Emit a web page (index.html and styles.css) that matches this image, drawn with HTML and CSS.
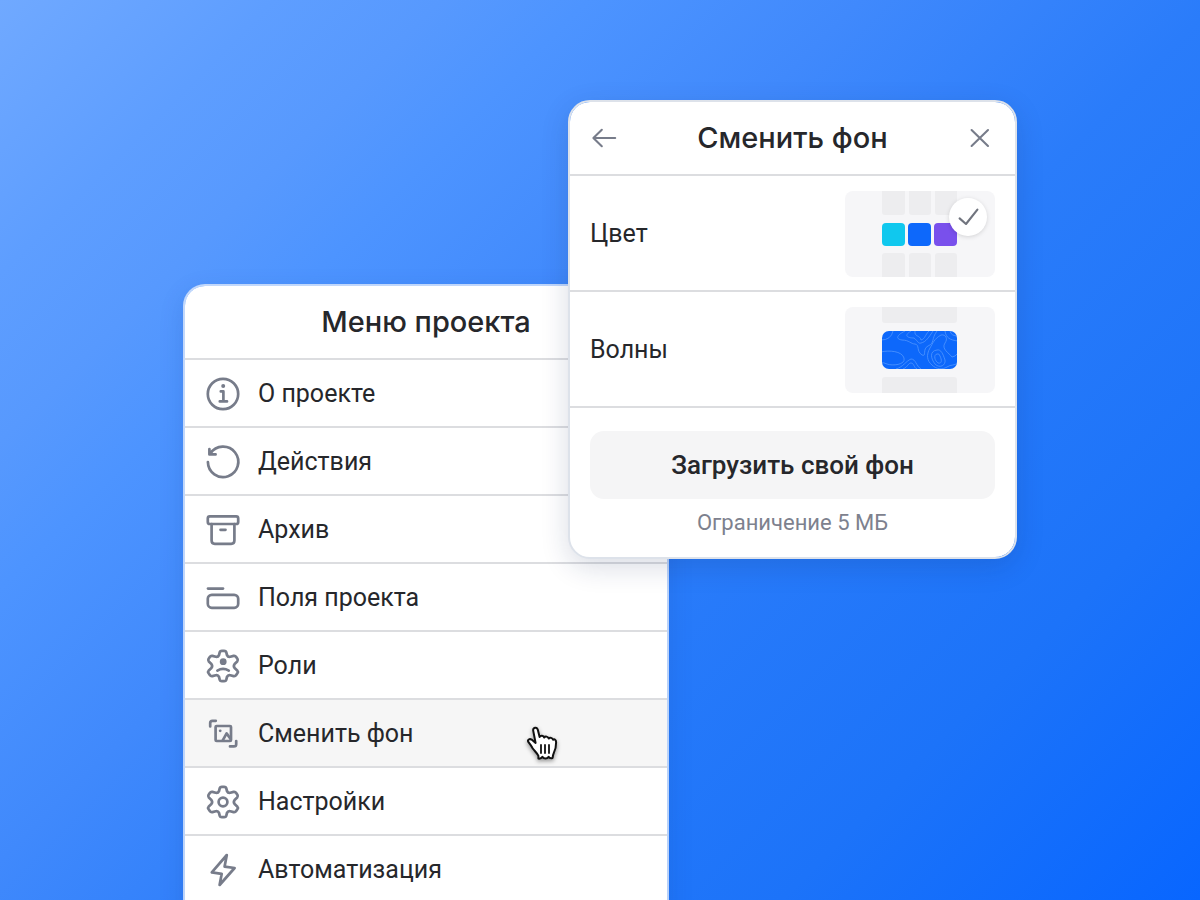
FILE: index.html
```
<!DOCTYPE html>
<html lang="ru">
<head>
<meta charset="utf-8">
<meta name="viewport" content="width=device-width, initial-scale=1">
<title>Меню проекта</title>
<link rel="stylesheet" href="styles.css">
</head>
<body>
<svg class="defs" aria-hidden="true">
  <symbol id="gear" viewBox="-18 -18 36 36">
    <path d="M-1.2-15.2H1.2Q2.8-15.2 3.3-13.7L4-10.9C4.6-9.5 5.8-8.9 7.3-9.2L10.6-10.1Q12.3-10.4 13.2-9L14.5-7Q15.3-5.6 14.2-4.4L11.6-2C10.7-.8 10.7.8 11.6 2L14.2 4.4Q15.3 5.6 14.5 7L13.2 9Q12.3 10.4 10.6 10.1L7.3 9.2C5.8 8.9 4.6 9.5 4 10.9L3.3 13.7Q2.8 15.2 1.2 15.2H-1.2Q-2.8 15.2-3.3 13.7L-4 10.9C-4.6 9.5-5.8 8.9-7.3 9.2L-10.6 10.1Q-12.3 10.4-13.2 9L-14.5 7Q-15.3 5.6-14.2 4.4L-11.6 2C-10.7.8-10.7-.8-11.6-2L-14.2-4.4Q-15.3-5.6-14.5-7L-13.2-9Q-12.3-10.4-10.6-10.1L-7.3-9.2C-5.8-8.9-4.6-9.5-4-10.9L-3.3-13.7Q-2.8-15.2-1.2-15.2Z"/>
  </symbol>
</svg>
<main class="stage">
  <nav class="panel menu" aria-labelledby="menu-title">
    <header class="panel-head"><h1 class="title" id="menu-title">Меню проекта</h1></header>
    <button class="item" type="button">
      <svg class="icon" viewBox="-18 -18 36 36"><circle r="15.2"/><path d="M-2.2-2.6H.4V7.4M-3.2 7.4H4"/><circle class="solid" cx=".2" cy="-8" r="2"/></svg>
      <span>О проекте</span>
    </button>
    <button class="item" type="button">
      <svg class="icon" viewBox="-18 -18 36 36"><path d="M-15.1 0A15.2 15.2 0 1 0-12.6-8.5M-13.6-13V-7.6H-7.4"/></svg>
      <span>Действия</span>
    </button>
    <button class="item" type="button">
      <svg class="icon" viewBox="-18 -18 36 36"><rect x="-15.2" y="-13.6" width="30.4" height="7.6" rx="2"/><path d="M-11.4-6V10.6Q-11.4 13.8-8.2 13.8H8.2Q11.4 13.8 11.4 10.6V-6M-2.5-.2H2.5"/></svg>
      <span>Архив</span>
    </button>
    <button class="item" type="button">
      <svg class="icon" viewBox="-18 -18 36 36"><path d="M-15-9.4H0"/><rect x="-15.2" y="-3.2" width="30.4" height="13" rx="4"/></svg>
      <span>Поля проекта</span>
    </button>
    <button class="item" type="button">
      <svg class="icon" viewBox="-18 -18 36 36"><use href="#gear" x="-18" y="-18" width="36" height="36"/><circle class="solid" cx=".2" cy="-4.3" r="3.4"/><path d="M-5.6 4.6Q0 1.2 5.8 4.6"/></svg>
      <span>Роли</span>
    </button>
    <button class="item hovered" type="button">
      <svg class="icon" viewBox="-18 -18 36 36"><path d="M-12.8-7.6V-11Q-12.8-13.2-10.6-13.2H-7.2M7 12.4H10.8Q13.2 12.4 13.2 10.2V7"/><rect x="-7.4" y="-8" width="15.4" height="15" rx="1"/><path d="M-.4 6.6L3.6-.6L7.6 5"/><circle class="solid" cx="-2.8" cy="-3.2" r="1.4"/></svg>
      <span>Сменить фон</span>
      <svg class="cursor" viewBox="0 0 34 38" aria-hidden="true"><path d="M6.2 4.6C5.6 1.2 10 .5 10.8 3.8L12.6 11C13.6 9.2 16.6 9.5 17.1 11.6C18.2 9.9 21.2 10.4 21.7 12.6C22.8 11.1 25.6 11.8 26.1 13.8C27.4 12.6 29.2 13.8 29.1 16.4C29.1 20.8 28.2 24 27 26.4C26.2 28.2 25.8 29.6 25.6 32C23.8 32.4 22.4 32.3 21.6 30.8C20 33.2 17 33.2 15.4 30.8C14.2 32.7 12.6 32.8 11.4 32.6V29.8C10.2 27.2 7.4 24.8 5.6 22.2C4.2 19.4 2.2 17.2 1.3 15.9C.2 13.8 2.6 12.4 4.6 13.6L8.6 16.9Z"/><path class="creases" d="M14 19V27M18 19V27M22 19V27"/></svg>
    </button>
    <button class="item" type="button">
      <svg class="icon" viewBox="-18 -18 36 36"><use href="#gear" x="-18" y="-18" width="36" height="36"/><circle r="4.4"/></svg>
      <span>Настройки</span>
    </button>
    <button class="item" type="button">
      <svg class="icon" viewBox="-18 -18 36 36"><path d="M3.8-15L-11.2 2.4L-1.3 3.8L-3.4 15L11.6-2L1.6-3.4Z"/></svg>
      <span>Автоматизация</span>
    </button>
  </nav>

  <section class="panel popup" aria-labelledby="popup-title">
    <header class="panel-head">
      <button class="head-button" type="button" aria-label="Назад"><svg class="icon thin" viewBox="-18 -18 36 36"><path d="M11.2 0H-10M-2.2-8.2L-10.6 0L-2.2 8.2"/></svg></button>
      <h2 class="title" id="popup-title">Сменить фон</h2>
      <button class="head-button" type="button" aria-label="Закрыть"><svg class="icon thin" viewBox="-18 -18 36 36"><path d="M-9.4-8L7 8M7-8L-9.4 8"/></svg></button>
    </header>
    <button class="option" type="button">
      <span>Цвет</span>
      <svg class="thumb" viewBox="0 0 150 86" aria-hidden="true">
        <rect width="150" height="86" rx="8" fill="#f6f6f8"/>
        <path fill="#ededef" d="M37 0H60V21Q60 24 57 24H40Q37 24 37 21ZM64 0H86V21Q86 24 83 24H67Q64 24 64 21ZM90 0H112V21Q112 24 109 24H93Q90 24 90 21ZM37 86H60V65Q60 62 57 62H40Q37 62 37 65ZM64 86H86V65Q86 62 83 62H67Q64 62 64 65ZM90 86H112V65Q112 62 109 62H93Q90 62 90 65Z"/>
        <rect x="37" y="32" width="23" height="23" rx="4" fill="#10c8ee"/>
        <rect x="63" y="32" width="23" height="23" rx="4" fill="#0d68fb"/>
        <rect x="89" y="32" width="23" height="23" rx="4" fill="#7950ec"/>
        <circle class="badge" cx="123" cy="26" r="19"/>
        <path class="tick" d="M114.6 27.4L121 33L132.4 18.6"/>
      </svg>
    </button>
    <button class="option" type="button">
      <span>Волны</span>
      <svg class="thumb" viewBox="0 0 150 86" aria-hidden="true">
        <defs><clipPath id="wave-clip"><rect x="37" y="24" width="75" height="38" rx="7"/></clipPath></defs>
        <rect width="150" height="86" rx="8" fill="#f6f6f8"/>
        <path fill="#ededef" d="M37 0H112V13Q112 16 109 16H40Q37 16 37 13ZM37 86H112V73Q112 70 109 70H40Q37 70 37 73Z"/>
        <rect x="37" y="24" width="75" height="38" rx="7" fill="#0d68fb"/>
        <g class="waves" clip-path="url(#wave-clip)">
          <path d="M36 33Q46 33 48 24M36 45C44 43 57 44 59 51C61 58 47 59 42 57Q38 55 36 56"/>
          <path d="M60 24C52 28 50 32 57 33C64 33 66 37 70 37C75 38 71 44 77 48C82 50 77 42 83 39C90 36 86 32 92 24"/>
          <path d="M66 24C58 29 63 31 69 31C73 34 73 37 76 36C81 35 84 30 88 24M70 24C69 30 75 28 76 33C80 32 80 28 84 24"/>
          <path d="M51 62C58 60 61 54 66 52C71 52 71 59 76 62M58 62C63 60 63 56 66 56C69 56 69 61 72 62"/>
          <path d="M96 28C89 32 88 36 85 41C81 48 82 54 87 58C91 62 97 63 102 60C106 57 110 59 112 56M92 43C84 44 86 52 90 57C95 62 101 58 100 53C98 47 96 42 92 43Z"/>
          <path d="M96 28C101 27 103 32 100 36C96 42 104 46 107 50Q110 50 113 46M100 24C101 31 105 33 113 34M105 24Q106 29 113 29M92 47C88 48 90 54 93 56C97 57 97 53 95 49Q94 46 92 47Z"/>
        </g>
      </svg>
    </button>
    <div class="upload">
      <button class="upload-button" type="button">Загрузить свой фон</button>
      <p class="hint">Ограничение 5 МБ</p>
    </div>
  </section>
</main>
</body>
</html>
```
FILE: styles.css
```
* { box-sizing: border-box; }

body {
  margin: 0;
  font-family: Roboto, "Open Sans", sans-serif;
  font-size: 25px;
  line-height: 32px;
  color: #26272b;
}

button {
  font: inherit;
  color: inherit;
  border: 0;
  background: none;
  cursor: pointer;
}

.defs { display: block; width: 0; height: 0; }

.stage {
  display: grid;
  grid-template-columns: 183fr 385fr 101fr 348fr 183fr;
  align-items: start;
  height: 100vh;
  overflow: hidden;
  background: linear-gradient(135deg, #70a9ff 0%, #5e9eff 13%, #5799fe 21%, #4d94ff 28%, #4089fc 41%, #2a7cfa 58%, #1c73f9 80%, #0866ff 100%);
}

.panel {
  grid-row: 1;
  border: 2px solid rgba(222, 232, 250, .8);
  border-radius: 22px;
  background: #fff;
  background-clip: padding-box;
}

.menu {
  grid-column: 2 / 4;
  margin-top: 284px;
  padding-bottom: 24px;
  overflow: hidden;
  box-shadow: 0 8px 24px rgba(20, 60, 140, .16);
}

.popup {
  grid-column: 3 / 5;
  margin-top: 100px;
  border-color: #dde2ea;
  box-shadow: 0 8px 28px rgba(20, 40, 90, .16);
}

.panel-head {
  display: flex;
  align-items: center;
  justify-content: center;
  height: 74px;
  padding: 0 16px;
  border-bottom: 2px solid #dcdde0;
}

.title {
  flex: 1;
  margin: 0;
  font-family: Inter, sans-serif;
  font-size: 29px;
  font-weight: 500;
  line-height: 36px;
  text-align: center;
}

.head-button { display: flex; padding: 0; }

.item {
  display: flex;
  align-items: center;
  gap: 17px;
  width: 100%;
  height: 68px;
  padding: 2px 20px 0;
  border-bottom: 2px solid #dcdde0;
  text-align: left;
}

.hovered { position: relative; background: #f6f6f6; }

.icon {
  flex: none;
  width: 36px;
  height: 36px;
  overflow: visible;
  fill: none;
  stroke: #777c8a;
  stroke-width: 2.7;
  stroke-linecap: round;
  stroke-linejoin: round;
}

.thin { stroke-width: 2.1; }
.icon .solid { fill: #777c8a; stroke: none; }

.cursor {
  position: absolute;
  top: 26px;
  left: 342px;
  width: 34px;
  height: 38px;
  overflow: visible;
  fill: #fff;
  stroke: #111;
  stroke-width: 2;
  stroke-linejoin: round;
  filter: drop-shadow(0 2px 2px rgba(0, 0, 0, .4));
}

.creases { stroke-width: 1.8; stroke-linecap: round; }

.option {
  display: flex;
  align-items: center;
  justify-content: space-between;
  width: 100%;
  height: 116px;
  padding: 2px 20px 0;
  border-bottom: 2px solid #dcdde0;
}

.thumb { width: 150px; height: 86px; }

.badge { fill: #fff; filter: drop-shadow(0 1px 2px rgba(0, 0, 0, .14)); }

.tick {
  fill: none;
  stroke: #70747e;
  stroke-width: 2.1;
  stroke-linecap: round;
  stroke-linejoin: round;
}

.waves { fill: none; stroke: #5c9dff; stroke-width: .7; }

.upload {
  display: grid;
  gap: 8px;
  padding: 23px 20px 18px;
  text-align: center;
}

.upload-button {
  height: 68px;
  border-radius: 14px;
  background: #f5f5f6;
  font-size: 26px;
  font-weight: 500;
}

.hint {
  margin: 0;
  font-size: 22px;
  color: #7d818e;
}
```
